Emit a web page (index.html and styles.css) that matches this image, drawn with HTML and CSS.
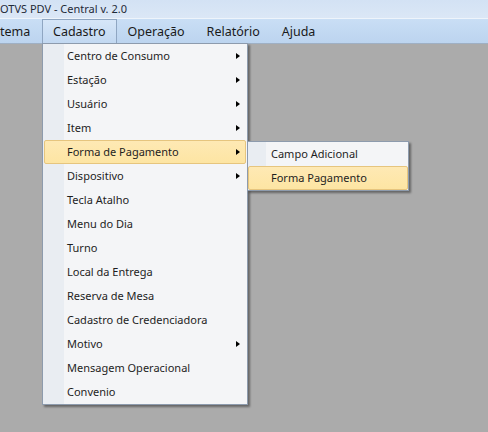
FILE: index.html
```html
<!DOCTYPE html>
<html lang="pt-BR">
<head>
    <meta charset="UTF-8">
    <title>TOTVS PDV - Central v. 2.0</title>
    <link rel="stylesheet" href="styles.css">
</head>
<body>
    <div class="titlebar">OTVS PDV - Central v. 2.0</div>
    <div class="menubar">
        <span class="menubar-item first">tema</span>
        <span class="menubar-item open">Cadastro</span>
        <span class="menubar-item">Operação</span>
        <span class="menubar-item">Relatório</span>
        <span class="menubar-item">Ajuda</span>
    </div>
    <div class="workspace">
        <ul class="menu dropdown">
            <li class="has-sub">Centro de Consumo</li>
            <li class="has-sub">Estação</li>
            <li class="has-sub">Usuário</li>
            <li class="has-sub">Item</li>
            <li class="has-sub active">Forma de Pagamento
                <ul class="menu submenu">
                    <li>Campo Adicional</li>
                    <li class="active">Forma Pagamento</li>
                </ul>
            </li>
            <li class="has-sub">Dispositivo</li>
            <li>Tecla Atalho</li>
            <li>Menu do Dia</li>
            <li>Turno</li>
            <li>Local da Entrega</li>
            <li>Reserva de Mesa</li>
            <li>Cadastro de Credenciadora</li>
            <li class="has-sub">Motivo</li>
            <li>Mensagem Operacional</li>
            <li>Convenio</li>
        </ul>
    </div>
</body>
</html>
```

FILE: styles.css
```css
body {
    margin: 0;
    background-color: #ababab;
    font-family: "Noto Sans", "Open Sans", sans-serif;
    color: #1e1e1e;
    width: 488px;
    height: 432px;
    overflow: hidden;
}
.titlebar {
    height: 19px;
    line-height: 18px;
    font-size: 11px;
    background: linear-gradient(#d3e2f4, #dbe7f6);
    color: #1f2a38;
    box-sizing: border-box;
    border-bottom: 1px solid #eef4fb;
    white-space: nowrap;
}
.menubar {
    display: flex;
    height: 24px;
    background: linear-gradient(#c9def5, #bcd4ef);
    border-bottom: 1px solid #9fb0c4;
}
.menubar-item {
    padding: 0 10px;
    line-height: 23px;
    font-size: 12.5px;
    color: #1a1a1a;
    border: 1px solid transparent;
    border-bottom: none;
}
.menubar-item.first {
    padding-left: 0;
    border-left: none;
    width: 31px;
}
.menubar-item.open {
    background: linear-gradient(#d6e6f8, #c2d8f1);
    border-color: #8fa6c2;
}
.workspace {
    position: relative;
}
.menu {
    list-style: none;
    margin: 0;
    padding: 0;
    font-size: 11px;
    background: linear-gradient(to right, #e9edf2 21px, #f4f5f7 21px);
    border: 1px solid #8d9bad;
    box-shadow: 2px 2px 2px rgba(0, 0, 0, 0.4);
}
.dropdown {
    position: absolute;
    left: 42px;
    top: -1px;
    width: 204px;
}
.menu li {
    position: relative;
    height: 24px;
    line-height: 22px;
    padding-left: 22px;
    margin: 0 1px;
    box-sizing: border-box;
    border: 1px solid transparent;
    border-radius: 2px;
    white-space: nowrap;
}
.menu li.has-sub::after {
    content: "";
    position: absolute;
    right: 5px;
    top: 8px;
    border-left: 4px solid #000;
    border-top: 3.5px solid transparent;
    border-bottom: 3.5px solid transparent;
}
.menu li.active {
    background: linear-gradient(#fee9b4, #fde5a3);
    border-color: #e6c57e;
}
.submenu {
    position: absolute;
    left: 202px;
    top: 0;
    width: 160px;
    background: linear-gradient(to right, #e9edf2 18px, #f4f5f7 18px);
}
.submenu li {
    padding-left: 22px;
    margin: 0;
}
```
